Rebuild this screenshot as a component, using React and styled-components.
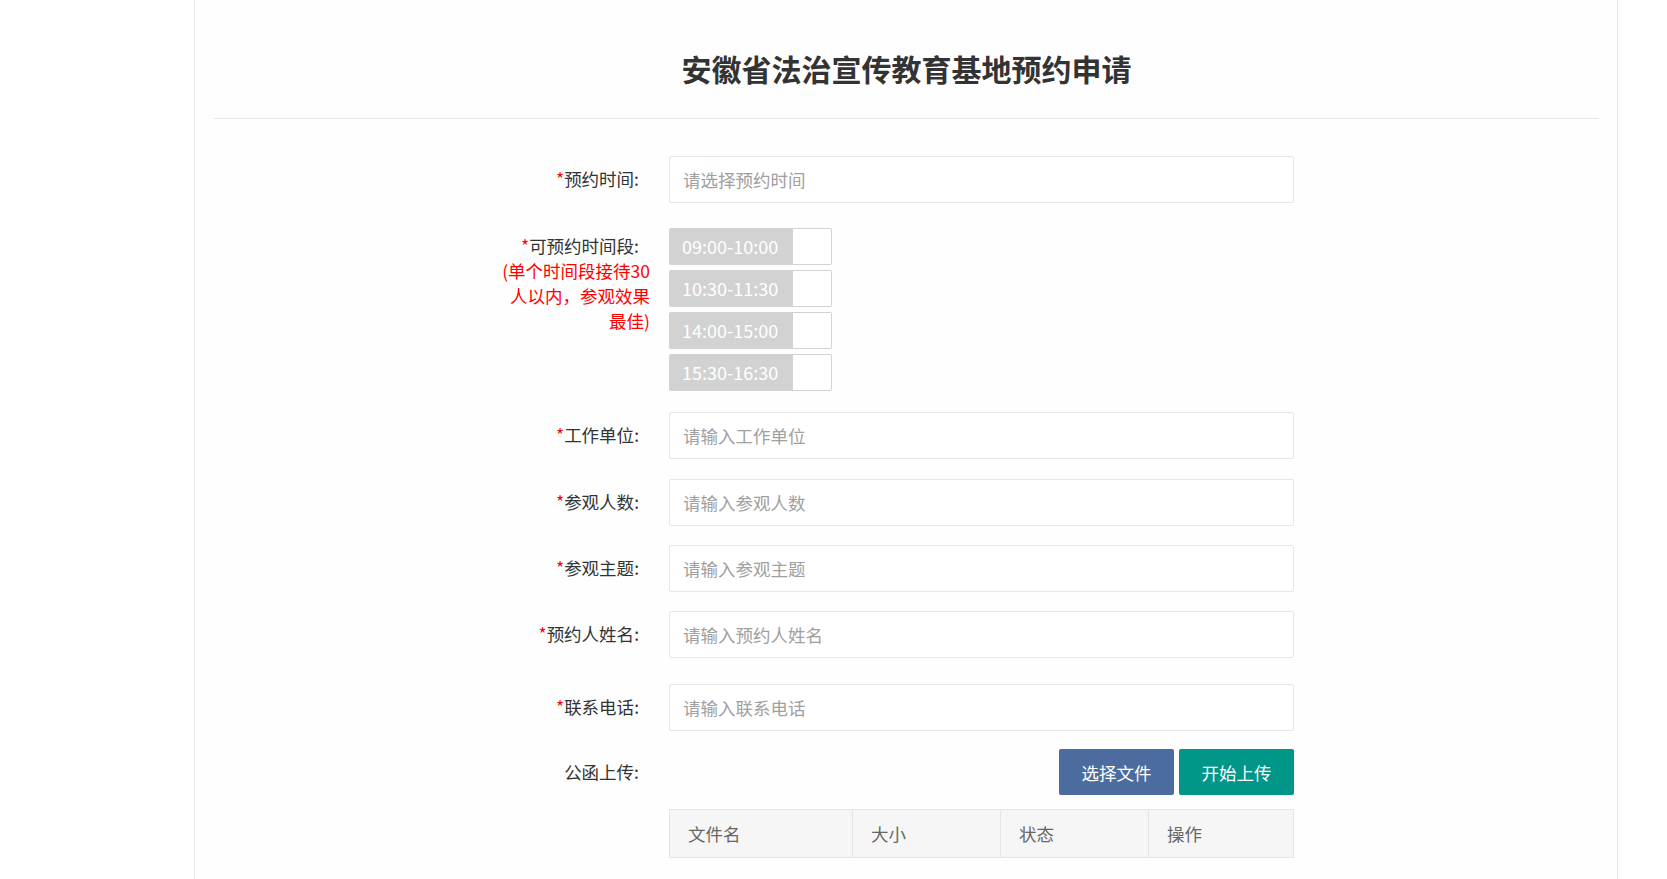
import React from 'react';
import styled, { createGlobalStyle } from 'styled-components';

const GlobalStyle = createGlobalStyle`
  html, body { margin: 0; padding: 0; background: #fff; }
  body { font-family: "Noto Sans CJK SC", "Noto Sans", sans-serif; color: #333; }
  * { box-sizing: border-box; }
`;

const Page = styled.div`
  padding-left: 194px;
  min-height: 879px;
`;

const Panel = styled.div`
  width: 1424px;
  min-height: 879px;
  border-left: 1px solid #e6e6e6;
  border-right: 1px solid #e6e6e6;
  padding: 0 18px 0 19px;
  background: #fefefe;
`;

const Header = styled.div`
  height: 119px;
  border-bottom: 1px solid #e6e6e6;
  display: flex;
  align-items: center;
  justify-content: center;
  padding-top: 17px;
`;

const Title = styled.h2`
  margin: 0;
  font-size: 30px;
  line-height: 40px;
  font-weight: bold;
  color: #333;
`;

const Form = styled.form`
  padding-top: 37px;
`;

const FormItem = styled.div`
  display: flex;
  align-items: ${(p) => (p.$top ? 'flex-start' : 'center')};
  margin-bottom: ${(p) => p.$mb ?? 20}px;
`;

const Label = styled.label`
  flex: none;
  width: 455px;
  padding: ${(p) => p.$pt ?? 0}px 30px 2px 0;
  text-align: right;
  font-size: 17.5px;
  line-height: 25px;
  color: #333;
`;

const Star = styled.span`
  color: #f00;
`;

const Note = styled.span`
  display: block;
  margin-right: -11px;
  color: #f00;
`;

const Input = styled.input`
  width: 625px;
  height: 47px;
  border: 1px solid #e6e6e6;
  border-radius: 2px;
  padding: 0 13px;
  font-family: inherit;
  font-size: 17.5px;
  color: #333;
  background: #fff;
  outline: none;
  &::placeholder { color: #a0a0a0; }
`;

const SlotList = styled.div`
  display: flex;
  flex-direction: column;
  gap: 5px;
`;

const Slot = styled.div`
  display: flex;
  width: 163px;
  height: 37px;
  cursor: pointer;
`;

const SlotText = styled.span`
  flex: none;
  width: 124px;
  padding-left: 13px;
  background: #d2d2d2;
  color: #fff;
  font-size: 18px;
  line-height: 37px;
  border-radius: 2px 0 0 2px;
  white-space: nowrap;
`;

const SlotBox = styled.i`
  flex: 1;
  border: 1px solid #d2d2d2;
  border-left: none;
  border-radius: 0 2px 2px 0;
  background: #fff;
`;

const Actions = styled.div`
  width: 625px;
  display: flex;
  justify-content: flex-end;
  gap: 5px;
`;

const Button = styled.button`
  width: 115px;
  height: 46px;
  border: none;
  border-radius: 2px;
  background: ${(p) => p.$bg};
  color: #fff;
  font-family: inherit;
  font-size: 17.5px;
  cursor: pointer;
`;

const FileTable = styled.table`
  width: 624px;
  border-collapse: collapse;
  table-layout: fixed;
`;

const Th = styled.th`
  width: ${(p) => p.$w}px;
  height: 48px;
  padding: 0 18px;
  border: 1px solid #e6e6e6;
  background: #f6f6f6;
  text-align: left;
  font-weight: normal;
  font-size: 17.5px;
  color: #666;
`;

const fields = [
  { label: '工作单位', ph: '请输入工作单位', mb: 20 },
  { label: '参观人数', ph: '请输入参观人数', mb: 19 },
  { label: '参观主题', ph: '请输入参观主题', mb: 19 },
  { label: '预约人姓名', ph: '请输入预约人姓名', mb: 26 },
  { label: '联系电话', ph: '请输入联系电话', mb: 18 },
];

const slots = ['09:00-10:00', '10:30-11:30', '14:00-15:00', '15:30-16:30'];

export default function App() {
  return (
    <>
      <GlobalStyle />
      <Page>
        <Panel>
          <Header>
            <Title>安徽省法治宣传教育基地预约申请</Title>
          </Header>
          <Form onSubmit={(e) => e.preventDefault()}>
            <FormItem $mb={25}>
              <Label><Star>*</Star>预约时间:</Label>
              <Input placeholder="请选择预约时间" readOnly />
            </FormItem>
            <FormItem $top $mb={21}>
              <Label $pt={5}>
                <Star>*</Star>可预约时间段:
                <Note>(单个时间段接待30<br />人以内，参观效果<br />最佳)</Note>
              </Label>
              <SlotList>
                {slots.map((s) => (
                  <Slot key={s}>
                    <SlotText>{s}</SlotText>
                    <SlotBox />
                  </Slot>
                ))}
              </SlotList>
            </FormItem>
            {fields.map((f) => (
              <FormItem key={f.label} $mb={f.mb}>
                <Label><Star>*</Star>{f.label}:</Label>
                <Input placeholder={f.ph} />
              </FormItem>
            ))}
            <FormItem $mb={14}>
              <Label>公函上传:</Label>
              <Actions>
                <Button type="button" $bg="#4c6ca0">选择文件</Button>
                <Button type="button" $bg="#009688">开始上传</Button>
              </Actions>
            </FormItem>
            <FormItem $mb={0}>
              <Label />
              <FileTable>
                <thead>
                  <tr>
                    <Th $w={183}>文件名</Th>
                    <Th $w={148}>大小</Th>
                    <Th $w={148}>状态</Th>
                    <Th $w={145}>操作</Th>
                  </tr>
                </thead>
              </FileTable>
            </FormItem>
          </Form>
        </Panel>
      </Page>
    </>
  );
}
